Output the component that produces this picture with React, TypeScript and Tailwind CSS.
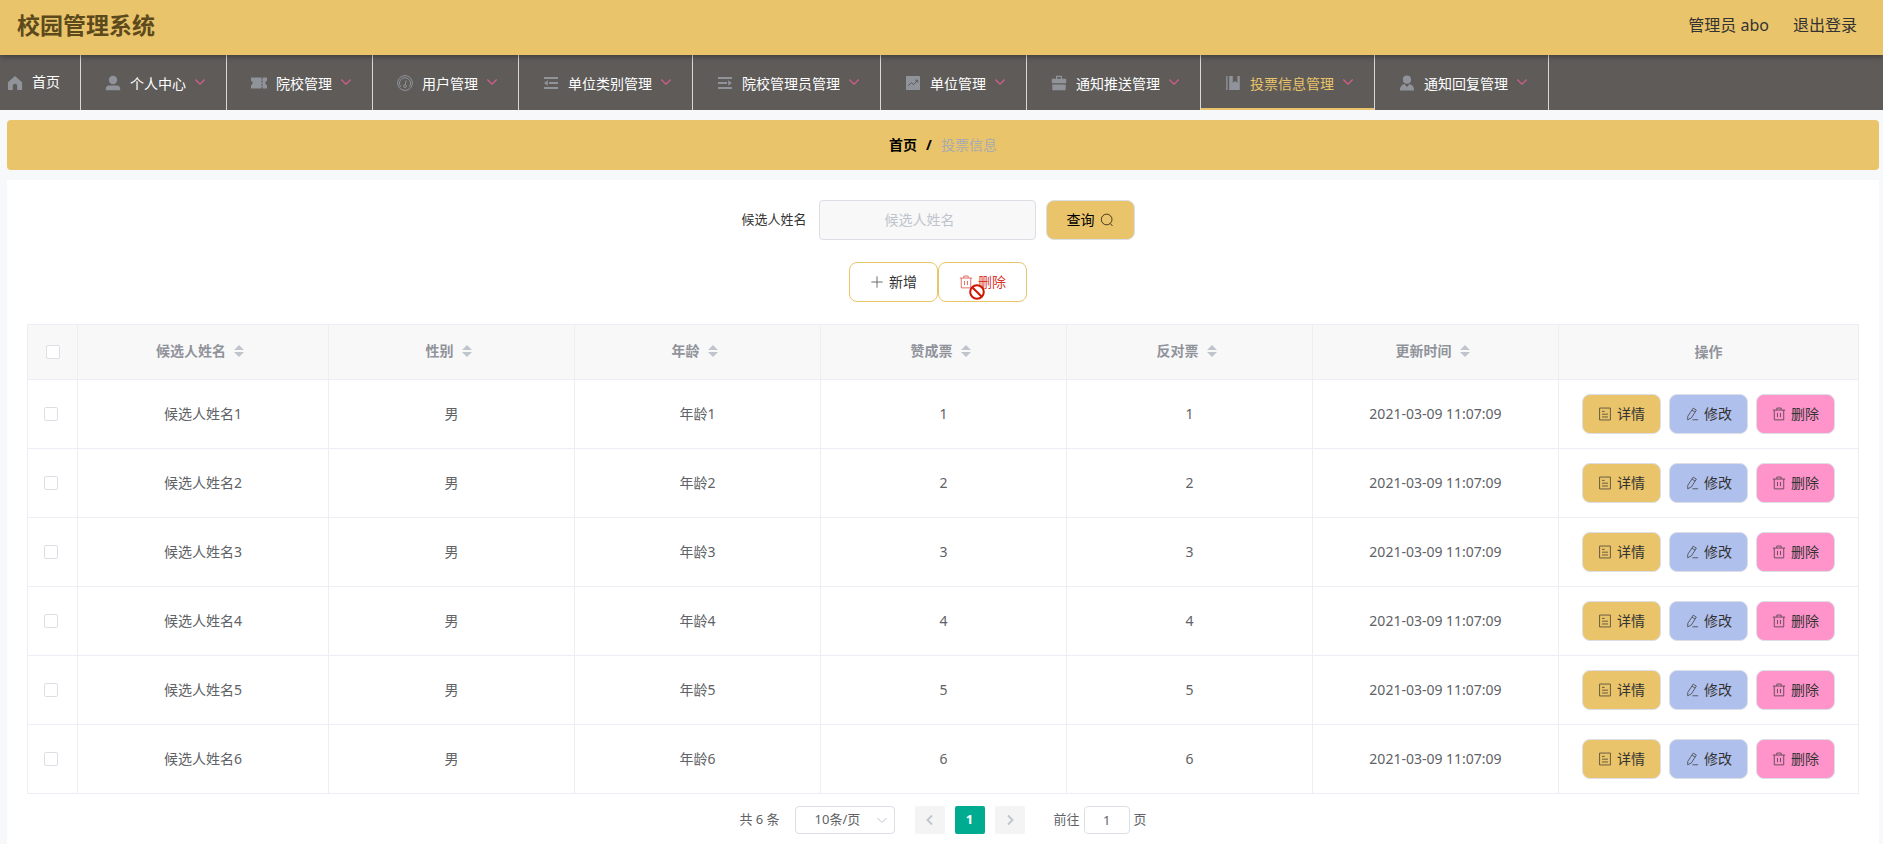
import type { ReactNode } from 'react';

const IconBase = ({ children }: { children: ReactNode }) => (
  <svg viewBox="0 0 16 16" className="size-[14px] opacity-80" fill="none" stroke="currentColor" strokeWidth="1" aria-hidden="true">
    {children}
  </svg>
);

const NavIcon = ({ name }: { name: string }) => {
  switch (name) {
    case 'home':
      return <path d="M8 1 .9 7.2V15h4.9v-4.2c0-2.8 4.4-2.8 4.4 0V15h4.9V7.2z" />;
    case 'user':
      return <path d="M8 .8a4.2 4.2 0 0 1 0 8.4A4.2 4.2 0 0 1 8 .8M4 10.4h8c2 0 3.2 1.4 3.2 3.4v1.4H.8v-1.4c0-2 1.2-3.4 3.2-3.4" />;
    case 'ticket':
      return (
        <>
          <path d="M0 2.4h10.4v2h1.2v-2H16v3.4a2.3 2.3 0 0 0 0 4.4v3.4h-4.4v-2h-1.2v2H0v-3.4a2.3 2.3 0 0 0 0-4.4z" />
          <path d="M10.4 5.6h1.2v2h-1.2zm0 3.2h1.2v1.7h-1.2z" fill="#5e5b59" />
        </>
      );
    case 'odometer':
      return (
        <g fill="none" stroke="currentColor" strokeWidth="1">
          <circle cx="8" cy="8" r="7.4" />
          <path d="M3.8 11.8A5.500 5.500 0 1 1 12.200 11.8M9.2 5.400 8.300 9.6" />
          <circle cx="8" cy="11.1" r="1.4" />
        </g>
      );
    case 'fold':
      return <path d="M1 2h14v2H1zm5 5h9v2H6zm-5 5h14v2H1zM4.8 5.2v5.6L1 8z" />;
    case 'unfold':
      return <path d="M1 2h14v2H1zm0 5h9v2H1zm0 5h14v2H1zM11.2 5.2v5.6L15 8z" />;
    case 'marketing':
      return (
        <>
          <rect x="1" y="1" width="14" height="14" rx="0.6" />
          <path d="m3.2 10.8 3-3.2 2.4 2 4-4.4M10.2 5.2h2.5v2.4" fill="none" stroke="#5e5b59" strokeWidth="1" />
        </>
      );
    case 'briefcase':
      return <path d="M5 3.8V.8h6v3h4.2v4.4H.8V3.8zm1.2 0h3.6V2H6.2zM1.3 9.4h13.4v5.8H1.3z" fillRule="evenodd" />;
    case 'management':
      return <path d="M1.2 1h1.4v14H1.2zm3 0h3.6v7l2.3-2 2.3 2V1h2.4v14H4.2z" />;
    default:
      return <path d="M8 .6a4 4 0 0 1 0 8.2A4 4 0 0 1 8 .6M.8 15.4c.3-3.6 2-5.8 4.6-6.3L8 12l2.6-2.9c2.6.5 4.3 2.7 4.6 6.3z" />;
  }
};

const TrashIcon = () => (
  <IconBase>
    <path d="M1 3.5h14M5.5 3.3V1.2h5v2.1M2.6 3.5v11.2h10.8V3.5M6.3 6.8v4.8M9.7 6.8v4.8" />
  </IconBase>
);

const DetailIcon = () => (
  <IconBase>
    <path d="M1.8 1.2h12.4v13.6H1.8zM4.6 5h3M4.6 8.2h6.8M4.6 11.4h6.8" />
  </IconBase>
);

const EditIcon = () => (
  <IconBase>
    <path d="M9.4 1.3 13 3.5 7.2 12.6 3 14.6 3.2 10.6zM8 3.6l3.5 2.2M8.5 14.6H15" />
  </IconBase>
);

const menus = [
  { label: '个人中心', icon: 'user' },
  { label: '院校管理', icon: 'ticket' },
  { label: '用户管理', icon: 'odometer' },
  { label: '单位类别管理', icon: 'fold' },
  { label: '院校管理员管理', icon: 'unfold' },
  { label: '单位管理', icon: 'marketing' },
  { label: '通知推送管理', icon: 'briefcase' },
  { label: '投票信息管理', icon: 'management', active: true },
  { label: '通知回复管理', icon: 'custom' },
];

const columns = ['候选人姓名', '性别', '年龄', '赞成票', '反对票', '更新时间'];

const rows = [1, 2, 3, 4, 5, 6].map((n) => ({
  id: n,
  cells: [`候选人姓名${n}`, '男', `年龄${n}`, `${n}`, `${n}`, '2021-03-09 11:07:09'],
}));

const Checkbox = ({ label }: { label: string }) => (
  <input
    type="checkbox"
    aria-label={label}
    className="mx-auto block size-[14px] appearance-none rounded-xs border border-[#dcdfe6] bg-white checked:bg-[#00ac90]"
  />
);

const Header = () => (
  <header className="relative z-10 flex h-[55px] items-center justify-between bg-[#eac46a] pl-[17px] pr-[26px] pb-[6px] shadow-[0_1px_6px_rgba(0,0,0,0.4)]">
    <h1 className="text-[23px] leading-8 font-bold text-[#5c4a1c]">校园管理系统</h1>
    <div className="flex gap-6 text-base text-[#333]">
      <span>管理员 abo</span>
      <a href="#logout">退出登录</a>
    </div>
  </header>
);

const NavBar = () => (
  <nav className="flex h-[55px] bg-[#5e5b59] text-sm text-white">
    <a href="#home" className="flex items-center border-r border-[#d8d8d8] pl-[3px] pr-5">
      <span className="mr-[5px] flex w-6 justify-center text-[#909399]">
        <svg viewBox="0 0 16 16" className="size-4" fill="currentColor" aria-hidden="true">
          <NavIcon name="home" />
        </svg>
      </span>
      <span className="pb-[2px]">首页</span>
    </a>
    {menus.map((menu) => (
      <button
        key={menu.label}
        type="button"
        className={
          menu.active
            ? 'flex items-center whitespace-nowrap border-r border-r-[#d8d8d8] px-5 text-[#eac46a] shadow-[inset_0_-2px_0_#eac46a]'
            : 'flex items-center whitespace-nowrap border-r border-r-[#d8d8d8] px-5'
        }
      >
        <span className="mr-[5px] flex w-6 justify-center text-[#909399]">
          <svg viewBox="0 0 16 16" className="size-4" fill="currentColor" aria-hidden="true">
            <NavIcon name={menu.icon} />
          </svg>
        </span>
        <span className="pt-[2px]">{menu.label}</span>
        <svg viewBox="0 0 12 12" className="mb-[2px] ml-2 size-3" fill="none" stroke="#d4608c" strokeWidth="1.2" aria-hidden="true">
          <path d="M1.3 3.500 6 8.200l4.700-4.700" />
        </svg>
      </button>
    ))}
  </nav>
);

const SearchForm = () => (
  <form className="flex items-center justify-center pr-[10px]">
    <label htmlFor="candidate" className="pr-3 text-[13px] text-[#333]">
      候选人姓名
    </label>
    <input
      id="candidate"
      type="text"
      placeholder="候选人姓名"
      className="h-10 w-[217px] rounded-sm border border-[#dcdfe6] bg-[#f8f8f9] pl-[15px] pr-[30px] pb-[2px] text-center text-sm placeholder:text-[#c0c4cc]"
    />
    <button
      type="button"
      className="ml-[10px] flex h-10 w-[89px] items-center justify-center gap-[5px] rounded-lg border border-[#dcdfe6] bg-[#eac46a] text-sm text-black"
    >
      查询
      <IconBase>
        <circle cx="7.6" cy="7.4" r="6.1" />
        <path d="m11.8 12 2.4 2.8" />
      </IconBase>
    </button>
  </form>
);

const Toolbar = () => (
  <div className="mt-[22px] flex justify-center pr-[10px]">
    <button
      type="button"
      className="flex h-10 w-[89px] items-center justify-center gap-[5px] rounded-lg border border-[#eac46a] text-sm text-[#333]"
    >
      <IconBase>
        <path d="M8 1.5v13M1.5 8h13" />
      </IconBase>
      新增
    </button>
    <button
      type="button"
      className="relative flex h-10 w-[89px] cursor-not-allowed items-center justify-center gap-[5px] rounded-lg border border-[#eac46a] text-sm text-[#d8362c]"
    >
      <TrashIcon />
      删除
      <svg viewBox="0 0 16 16" className="absolute left-[30px] top-[21px] size-4" fill="none" stroke="#cf1600" strokeWidth="2" aria-hidden="true">
        <circle cx="8" cy="8" r="6.8" fill="white" />
        <path d="m3.2 3.2 9.6 9.6" />
      </svg>
    </button>
  </div>
);

const rowButton = 'flex h-10 w-[79px] items-center justify-center gap-[5px] rounded-lg border border-[#dcdfe6]';

const VoteTable = () => (
  <table className="mt-[22px] w-full table-fixed border-collapse text-center text-sm text-[#606266]">
    <colgroup>
      <col className="w-[50px]" />
      <col className="w-[251px]" />
      <col span={5} />
      <col className="w-[300px]" />
    </colgroup>
    <thead className="bg-[#f8f8f9] text-[#909399]">
      <tr className="h-[55px]">
        <th className="border border-[#ebeef5]">
          <Checkbox label="全选" />
        </th>
        {columns.map((column) => (
          <th key={column} className="border border-[#ebeef5] pr-[6px] pb-[2px] font-bold">
            <span className="inline-flex items-center gap-2">
              {column}
              <svg viewBox="0 0 10 12" className="h-3 w-[10px]" fill="#c0c4cc" aria-hidden="true">
                <path d="M5 0l5 5H0zM5 12L0 7h10z" />
              </svg>
            </span>
          </th>
        ))}
        <th className="border border-[#ebeef5] font-bold">操作</th>
      </tr>
    </thead>
    <tbody>
      {rows.map((row) => (
        <tr key={row.id} className="h-[69px]">
          <td className="border border-[#ebeef5] pr-1">
            <Checkbox label={`选择${row.id}`} />
          </td>
          {row.cells.map((cell, i) => (
            <td key={i} className="border border-[#ebeef5]">
              {cell}
            </td>
          ))}
          <td className="border border-[#ebeef5]">
            <div className="flex justify-center gap-2 text-[#333]">
              <button type="button" className={`${rowButton} bg-[#eac46a]`}>
                <DetailIcon />
                详情
              </button>
              <button type="button" className={`${rowButton} bg-[#b0c0ec]`}>
                <EditIcon />
                修改
              </button>
              <button type="button" className={`${rowButton} bg-[#ff94cb]`}>
                <TrashIcon />
                删除
              </button>
            </div>
          </td>
        </tr>
      ))}
    </tbody>
  </table>
);

const Pagination = () => (
  <div className="mt-3 flex h-7 items-center justify-center text-[13px] text-[#606266]">
    <span className="mr-[15px]">共 6 条</span>
    <div className="relative">
      <select
        aria-label="每页条数"
        className="block h-7 w-[100px] appearance-none rounded-sm border border-[#dcdfe6] bg-white pl-[19px] pr-6"
      >
        <option>10条/页</option>
      </select>
      <svg viewBox="0 0 12 12" className="pointer-events-none absolute right-[7px] top-2 size-3" fill="none" stroke="#c0c4cc" aria-hidden="true">
        <path d="M1.5 4 6 8.5 10.5 4" />
      </svg>
    </div>
    <div className="ml-5 flex gap-[10px]">
      <button type="button" aria-label="上一页" className="flex h-7 w-[30px] items-center justify-center rounded-xs bg-[#f4f4f5] text-[#c0c4cc]">
        <svg viewBox="0 0 12 12" className="size-3" fill="none" stroke="currentColor" strokeWidth="1.8" aria-hidden="true">
          <path d="M8 1.5 3.5 6 8 10.5" />
        </svg>
      </button>
      <button type="button" className="h-7 w-[30px] rounded-xs bg-[#00ac90] font-bold text-white">
        1
      </button>
      <button type="button" aria-label="下一页" className="flex h-7 w-[30px] items-center justify-center rounded-xs bg-[#f4f4f5] text-[#c0c4cc]">
        <svg viewBox="0 0 12 12" className="size-3" fill="none" stroke="currentColor" strokeWidth="1.8" aria-hidden="true">
          <path d="M4 1.5 8.5 6 4 10.5" />
        </svg>
      </button>
    </div>
    <label className="ml-[29px] flex items-center">
      前往
      <input type="text" defaultValue="1" className="mx-1 h-7 w-[46px] rounded-sm border border-[#dcdfe6] text-center" />
      页
    </label>
  </div>
);

export default function App() {
  return (
    <div className="min-h-screen bg-[#f7f8fa] font-['Noto_Sans','Noto_Sans_CJK_SC',sans-serif]">
      <Header />
      <NavBar />
      <main className="pl-[7px] pr-1 pt-[10px]">
        <div className="flex h-[50px] items-center justify-center rounded-sm bg-[#eac46a] text-sm">
          <a href="#home" className="font-bold text-black">首页</a>
          <span className="mx-[9px] font-bold text-black">/</span>
          <span className="text-[#a8abb0]">投票信息</span>
        </div>
        <section className="mt-[10px] min-h-[664px] bg-white px-5 pt-5">
          <SearchForm />
          <Toolbar />
          <VoteTable />
          <Pagination />
        </section>
      </main>
    </div>
  );
}
